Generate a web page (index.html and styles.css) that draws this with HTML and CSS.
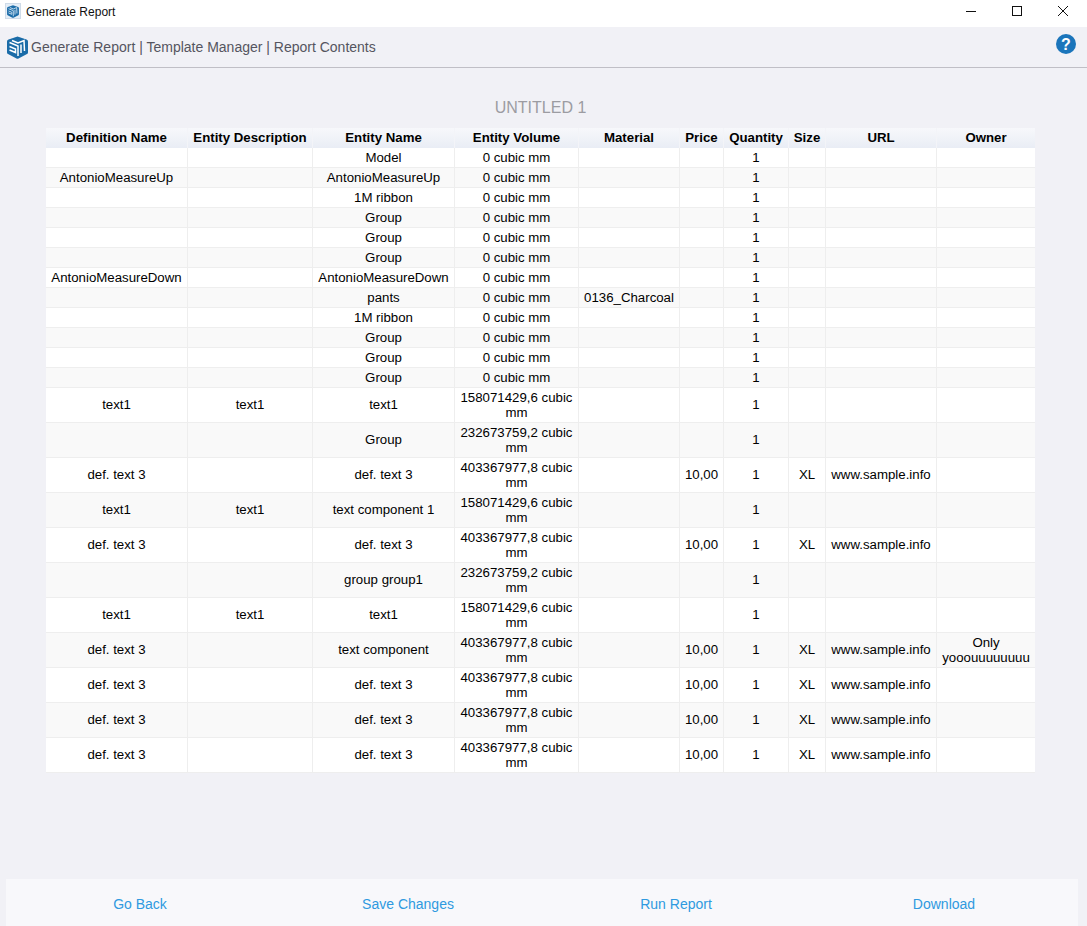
FILE: index.html
```html
<!DOCTYPE html>
<html lang="en">
<head>
<meta charset="utf-8">
<title>Generate Report</title>
<link rel="stylesheet" href="styles.css">
</head>
<body>
<div class="window">
  <div class="titlebar">
    <div class="title-left">
      <span class="app-icon">
        <svg width="12" height="13" viewBox="0 0 21 23"><path d="M10.500 .5 19.500 3.500Q21 4 21 5.500V16.500Q21 17.500 20 18L11.500 22.500Q10.500 23 9.500 22.500L1 18Q0 17.500 0 16.500V5.500Q0 4 1.500 3.500z" fill="#1b6ca8"/><path d="M2.500 6.500 11 10v10M2.500 10.500 8.500 13v3.500L2.500 14M5 4.500 11 7 17 4.500 17.500 15M14 8.500V17" fill="none" stroke="#cfe3f2" stroke-width="1.600"/></svg>
      </span>
      <span class="app-name">Generate Report</span>
    </div>
    <div class="win-controls">
      <svg class="win-btn" width="12" height="12" viewBox="0 0 12 12"><path d="M1 6.500h10" stroke="#111" fill="none"/></svg>
      <svg class="win-btn" width="12" height="12" viewBox="0 0 12 12"><rect x="1.500" y="1.500" width="9" height="9" stroke="#111" fill="none"/></svg>
      <svg class="win-btn" width="12" height="12" viewBox="0 0 12 12"><path d="M1 1l10 10M11 1L1 11" stroke="#111" fill="none"/></svg>
    </div>
  </div>
  <header class="appbar">
    <div class="crumbs">
      <svg class="logo" width="21" height="23" viewBox="0 0 21 23"><path d="M10.500 .5 19.500 3.500Q21 4 21 5.500V16.500Q21 17.500 20 18L11.500 22.500Q10.500 23 9.500 22.500L1 18Q0 17.500 0 16.500V5.500Q0 4 1.500 3.500z" fill="#1b6ca8"/><path d="M2.500 6.500 11 10v10M2.500 10.500 8.500 13v3.500L2.500 14M5 4.500 11 7 17 4.500 17.500 15M14 8.500V17" fill="none" stroke="#fff" stroke-width="1.500"/></svg>
      <span>Generate Report | Template Manager | Report Contents</span>
    </div>
    <svg class="help" width="20" height="20" viewBox="0 0 20 20"><circle cx="10" cy="10" r="10" fill="#1b75bb"/><text x="10" y="15.500" text-anchor="middle" class="help-mark">?</text></svg>
  </header>
  <main class="content">
    <h1 class="report-title">UNTITLED 1</h1>
    <table class="report">
      <colgroup>
        <col class="c1"><col class="c2"><col class="c3"><col class="c4"><col class="c5"><col class="c6"><col class="c7"><col class="c8"><col class="c9"><col class="c10">
      </colgroup>
      <thead>
        <tr><th>Definition Name</th><th>Entity Description</th><th>Entity Name</th><th>Entity Volume</th><th>Material</th><th>Price</th><th>Quantity</th><th>Size</th><th>URL</th><th>Owner</th></tr>
      </thead>
      <tbody>
        <tr><td></td><td></td><td>Model</td><td>0 cubic mm</td><td></td><td></td><td>1</td><td></td><td></td><td></td></tr>
        <tr><td>AntonioMeasureUp</td><td></td><td>AntonioMeasureUp</td><td>0 cubic mm</td><td></td><td></td><td>1</td><td></td><td></td><td></td></tr>
        <tr><td></td><td></td><td>1M ribbon</td><td>0 cubic mm</td><td></td><td></td><td>1</td><td></td><td></td><td></td></tr>
        <tr><td></td><td></td><td>Group</td><td>0 cubic mm</td><td></td><td></td><td>1</td><td></td><td></td><td></td></tr>
        <tr><td></td><td></td><td>Group</td><td>0 cubic mm</td><td></td><td></td><td>1</td><td></td><td></td><td></td></tr>
        <tr><td></td><td></td><td>Group</td><td>0 cubic mm</td><td></td><td></td><td>1</td><td></td><td></td><td></td></tr>
        <tr><td>AntonioMeasureDown</td><td></td><td>AntonioMeasureDown</td><td>0 cubic mm</td><td></td><td></td><td>1</td><td></td><td></td><td></td></tr>
        <tr><td></td><td></td><td>pants</td><td>0 cubic mm</td><td>0136_Charcoal</td><td></td><td>1</td><td></td><td></td><td></td></tr>
        <tr><td></td><td></td><td>1M ribbon</td><td>0 cubic mm</td><td></td><td></td><td>1</td><td></td><td></td><td></td></tr>
        <tr><td></td><td></td><td>Group</td><td>0 cubic mm</td><td></td><td></td><td>1</td><td></td><td></td><td></td></tr>
        <tr><td></td><td></td><td>Group</td><td>0 cubic mm</td><td></td><td></td><td>1</td><td></td><td></td><td></td></tr>
        <tr><td></td><td></td><td>Group</td><td>0 cubic mm</td><td></td><td></td><td>1</td><td></td><td></td><td></td></tr>
        <tr class="tall"><td>text1</td><td>text1</td><td>text1</td><td>158071429,6 cubic mm</td><td></td><td></td><td>1</td><td></td><td></td><td></td></tr>
        <tr class="tall"><td></td><td></td><td>Group</td><td>232673759,2 cubic mm</td><td></td><td></td><td>1</td><td></td><td></td><td></td></tr>
        <tr class="tall"><td>def. text 3</td><td></td><td>def. text 3</td><td>403367977,8 cubic mm</td><td></td><td>10,00</td><td>1</td><td>XL</td><td>www.sample.info</td><td></td></tr>
        <tr class="tall"><td>text1</td><td>text1</td><td>text component 1</td><td>158071429,6 cubic mm</td><td></td><td></td><td>1</td><td></td><td></td><td></td></tr>
        <tr class="tall"><td>def. text 3</td><td></td><td>def. text 3</td><td>403367977,8 cubic mm</td><td></td><td>10,00</td><td>1</td><td>XL</td><td>www.sample.info</td><td></td></tr>
        <tr class="tall"><td></td><td></td><td>group group1</td><td>232673759,2 cubic mm</td><td></td><td></td><td>1</td><td></td><td></td><td></td></tr>
        <tr class="tall"><td>text1</td><td>text1</td><td>text1</td><td>158071429,6 cubic mm</td><td></td><td></td><td>1</td><td></td><td></td><td></td></tr>
        <tr class="tall"><td>def. text 3</td><td></td><td>text component</td><td>403367977,8 cubic mm</td><td></td><td>10,00</td><td>1</td><td>XL</td><td>www.sample.info</td><td>Only yooouuuuuuuu</td></tr>
        <tr class="tall"><td>def. text 3</td><td></td><td>def. text 3</td><td>403367977,8 cubic mm</td><td></td><td>10,00</td><td>1</td><td>XL</td><td>www.sample.info</td><td></td></tr>
        <tr class="tall"><td>def. text 3</td><td></td><td>def. text 3</td><td>403367977,8 cubic mm</td><td></td><td>10,00</td><td>1</td><td>XL</td><td>www.sample.info</td><td></td></tr>
        <tr class="tall"><td>def. text 3</td><td></td><td>def. text 3</td><td>403367977,8 cubic mm</td><td></td><td>10,00</td><td>1</td><td>XL</td><td>www.sample.info</td><td></td></tr>
      </tbody>
    </table>
  </main>
  <footer class="actions">
    <a class="action">Go Back</a>
    <a class="action">Save Changes</a>
    <a class="action">Run Report</a>
    <a class="action">Download</a>
  </footer>
</div>
</body>
</html>
```

FILE: styles.css
```css
* { box-sizing: border-box; }
html, body { margin: 0; height: 100%; }
body {
  font-family: "Liberation Sans", Arial, sans-serif;
  background: #f1f1f6;
  color: #000;
  overflow: hidden;
}
.window { height: 926px; display: flex; flex-direction: column; }

.titlebar {
  height: 27px;
  flex: none;
  background: #fff;
  display: flex;
  align-items: flex-start;
  justify-content: space-between;
  padding-top: 3px;
}
.title-left { display: flex; align-items: center; padding-left: 5px; height: 16px; }
.app-icon {
  width: 16px; height: 16px;
  background: #e4edf6;
  border: 1px solid #cfdbe8;
  display: flex; align-items: center; justify-content: center;
}
.app-name { font-size: 12px; margin-left: 5px; padding-top: 2px; color: #111; }
.win-controls { display: flex; gap: 34px; padding: 2px 18px 0 0; align-items: center; }
.win-btn { display: block; }

.appbar {
  height: 41px;
  flex: none;
  background: #f1f1f6;
  border-bottom: 1px solid #c0bfc6;
  display: flex;
  align-items: center;
  justify-content: space-between;
  padding: 0 11px 0 7px;
}
.crumbs { display: flex; align-items: center; gap: 3px; font-size: 14px; color: #555560; }
.logo { display: block; }
.help { display: block; margin-bottom: 6px; }
.help-mark { font-family: "Liberation Sans", Arial, sans-serif; font-size: 16px; font-weight: 700; fill: #fff; }

.content { flex: 1; padding: 0 52px 0 46px; display: flex; flex-direction: column; min-height: 0; }
.report-title {
  margin: 0;
  padding-top: 31px;
  height: 60px;
  font-size: 16px;
  line-height: 18px;
  font-weight: 400;
  color: #9c9ca2;
  text-align: center;
}
.report {
  width: 989px;
  table-layout: fixed;
  border-collapse: separate;
  border-spacing: 0;
  font-size: 13.250px;
  background: #fff;
}
.c1 { width: 142px; }
.c2 { width: 125px; }
.c3 { width: 142px; }
.c4 { width: 124px; }
.c5 { width: 101px; }
.c6 { width: 44px; }
.c7 { width: 65px; }
.c8 { width: 37px; }
.c9 { width: 111px; }
.c10 { width: 98px; }

.report th {
  height: 20px;
  padding: 0 0 2px;
  font-weight: 700;
  line-height: 15px;
  text-align: center;
  background: linear-gradient(#f7f8fb, #e9edf5);
  border-right: 1px solid #f3f4f8;
}
.report th:last-child { border-right: 0; }
.report td {
  height: 20px;
  padding: 0 2px;
  line-height: 15px;
  text-align: center;
  vertical-align: middle;
  border-right: 1px solid #eeeeee;
  border-bottom: 1px solid #eeeeee;
  overflow-wrap: break-word;
}
.report td:last-child { border-right: 0; }
.report .tall td { height: 35px; padding-bottom: 1px; }
.report tbody tr:nth-child(even) { background: #f9f9f9; }

.actions {
  flex: none;
  height: 47px;
  margin: 0 9px 0 6px;
  padding-top: 2px;
  background: #f8f8fb;
  display: grid;
  grid-template-columns: repeat(4, 1fr);
  align-items: center;
  text-align: center;
  font-size: 14px;
}
.action { color: #2f9ae0; }
```
